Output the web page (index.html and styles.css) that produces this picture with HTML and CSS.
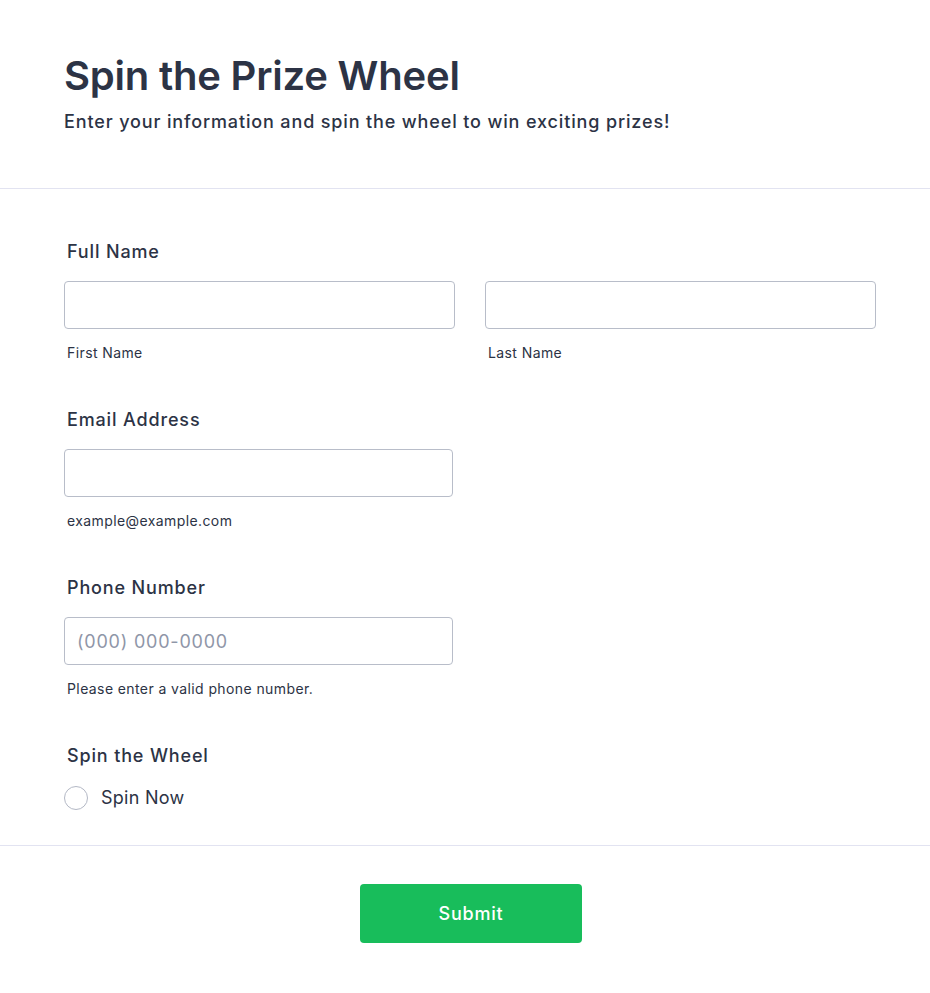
FILE: index.html
```html
<!DOCTYPE html>
<html lang="en">
<head>
<meta charset="utf-8">
<title>Spin the Prize Wheel</title>
<link rel="stylesheet" href="styles.css">
</head>
<body>
<header class="header">
  <h1 class="title">Spin the Prize Wheel</h1>
  <p class="subtitle">Enter your information and spin the wheel to win exciting prizes!</p>
</header>
<form class="form">
  <div class="field">
    <label class="label">Full Name</label>
    <div class="name-row">
      <div class="sub">
        <input class="input" type="text">
        <span class="sublabel">First Name</span>
      </div>
      <div class="sub">
        <input class="input" type="text">
        <span class="sublabel">Last Name</span>
      </div>
    </div>
  </div>
  <div class="field">
    <label class="label">Email Address</label>
    <div class="sub half">
      <input class="input" type="email">
      <span class="sublabel">example@example.com</span>
    </div>
  </div>
  <div class="field">
    <label class="label">Phone Number</label>
    <div class="sub half">
      <input class="input" type="tel" placeholder="(000) 000-0000">
      <span class="sublabel">Please enter a valid phone number.</span>
    </div>
  </div>
  <div class="field last">
    <label class="label spin-label">Spin the Wheel</label>
    <label class="radio">
      <span class="radio-circle"></span>
      <span class="radio-text">Spin Now</span>
    </label>
  </div>
</form>
<div class="footer">
  <button class="submit" type="button">Submit</button>
</div>
</body>
</html>
```
FILE: styles.css
```css
* { box-sizing: border-box; }
html, body { margin: 0; padding: 0; background: #ffffff; }
body {
  font-family: Inter, "Noto Sans", sans-serif;
  color: #2c3345;
  width: 930px;
}
.header {
  padding: 48px 64px 52px;
  border-bottom: 1px solid #e2e3f1;
}
.title {
  margin: 0;
  font-size: 40px;
  line-height: 56px;
  font-weight: 600;
  letter-spacing: -0.2px;
}
.subtitle {
  margin: 4px 0 0;
  font-size: 18px;
  line-height: 28px;
  font-weight: 500;
  letter-spacing: 0.86px;
}
.form {
  padding: 51px 54px 35px 64px;
  border-bottom: 1px solid #e2e3f1;
}
.field { margin-bottom: 45px; }
.field.last { margin-bottom: 0; }
.label {
  display: block;
  padding-left: 3px;
  font-size: 18px;
  line-height: 24px;
  font-weight: 500;
  letter-spacing: 0.85px;
  margin-bottom: 17px;
}
.spin-label { margin-bottom: 18px; }
.name-row {
  display: grid;
  grid-template-columns: 391px 391px;
  column-gap: 30px;
}
.sub { display: flex; flex-direction: column; }
.sub.half { width: 389px; }
.input {
  height: 48px;
  width: 100%;
  border: 1px solid #b8bdc9;
  border-radius: 4px;
  padding: 0 12px;
  font-family: inherit;
  font-size: 18px;
  letter-spacing: 0.78px;
  color: #2c3345;
  background: #fff;
  outline: none;
}
.input::placeholder { color: #8f96a8; }
.sublabel {
  margin-top: 14px;
  padding-left: 3px;
  font-size: 14px;
  line-height: 20px;
  letter-spacing: 0.4px;
}
.radio {
  display: flex;
  align-items: center;
  gap: 13px;
}
.radio-circle {
  width: 24px;
  height: 24px;
  border: 1px solid #b3b8c5;
  border-radius: 50%;
  background: #fff;
}
.radio-text {
  font-size: 18px;
  line-height: 24px;
  letter-spacing: 0.25px;
}
.footer {
  display: flex;
  justify-content: center;
  padding: 38px 0 50px 12px;
}
.submit {
  width: 222px;
  height: 59px;
  background: #18bd5b;
  border: none;
  border-radius: 4px;
  color: #fff;
  font-family: inherit;
  font-size: 18px;
  font-weight: 500;
  letter-spacing: 0.8px;
}
```
